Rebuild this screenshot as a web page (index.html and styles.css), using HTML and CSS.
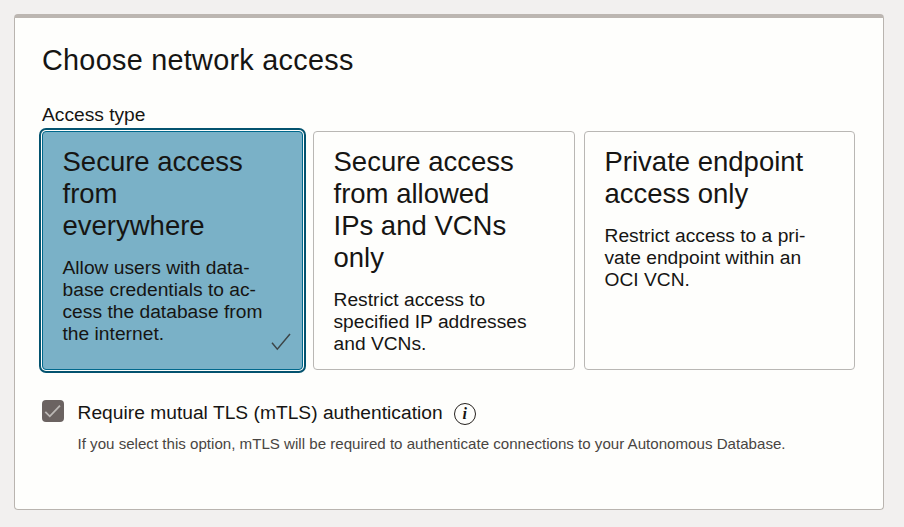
FILE: index.html
```html
<!DOCTYPE html>
<html lang="en">
<head>
<meta charset="utf-8">
<title>Choose network access</title>
<link rel="stylesheet" href="styles.css">
</head>
<body>
<section class="panel">
  <h2 class="title">Choose network access</h2>
  <div class="label">Access type</div>
  <div class="cards">
    <div class="card selected">
      <h3>Secure access<br>from<br>everywhere</h3>
      <p>Allow users with data-<br>base credentials to ac-<br>cess the database from<br>the internet.</p>
      <svg class="tick" width="20" height="18" viewBox="0 0 20 18"><path d="M1 9.8 6.3 16.2 19 1"/></svg>
    </div>
    <div class="card">
      <h3>Secure access<br>from allowed<br>IPs and VCNs<br>only</h3>
      <p>Restrict access to<br>specified IP addresses<br>and VCNs.</p>
    </div>
    <div class="card">
      <h3>Private endpoint<br>access only</h3>
      <p>Restrict access to a pri-<br>vate endpoint within an<br>OCI VCN.</p>
    </div>
  </div>
  <div class="option">
    <span class="checkbox"><svg width="22" height="22" viewBox="0 0 22 22"><path d="M3.3 11.8 7.8 16.3 18 5.7"/></svg></span>
    <div class="option-text">
      <div class="option-label"><span>Require mutual TLS (mTLS) authentication</span><span class="info">i</span></div>
      <div class="hint">If you select this option, mTLS will be required to authenticate connections to your Autonomous Database.</div>
    </div>
  </div>
</section>
</body>
</html>
```
FILE: styles.css
```css
* { box-sizing: border-box; }
body {
  margin: 0;
  padding: 14px 20px 17px 14px;
  height: 527px;
  background: #f2f0ef;
  color: #161513;
  font-family: "Liberation Sans", Arial, sans-serif;
}
h2, h3, p { margin: 0; font-weight: 400; }
.panel {
  height: 496px;
  padding: 26px 28px 0 27px;
  border: 1px solid #b9b4af;
  border-top: 4px solid #bcb6b1;
  border-radius: 4px;
  background: #fefefc;
}
.title { font-size: 28.8px; line-height: 32px; letter-spacing: 0.28px; }
.label { margin-top: 27px; padding-top: 1px; height: 28px; font-size: 19.2px; line-height: 22px; white-space: nowrap; }
.cards {
  display: grid;
  grid-template-columns: 262px 262px 271px;
  column-gap: 9px;
  height: 239px;
}
.card {
  position: relative;
  padding: 14px 0 0 19.5px;
  border: 1px solid #b9b7b4;
  border-radius: 4px;
  white-space: nowrap;
}
.card h3 { font-size: 27.5px; line-height: 32px; }
.card p { margin-top: 15px; font-size: 19.2px; line-height: 22px; letter-spacing: 0.02px; }
.selected {
  margin-right: 1px;
  background: #7ab1c7;
  border-color: #00688c;
  box-shadow: 0 0 0 1px #fefefc, 0 0 0 3px #04536f;
}
.tick { position: absolute; right: 11px; bottom: 18px; fill: none; stroke: #3c4547; stroke-width: 1.5; }
.option { display: flex; gap: 13.5px; margin-top: 30px; }
.checkbox { width: 22px; height: 22px; border-radius: 4px; background: #6b6361; }
.checkbox svg { display: block; fill: none; stroke: #bcb8b5; stroke-width: 1.8; }
.option-label { display: flex; gap: 11px; height: 25px; padding-top: 1px; font-size: 19.2px; line-height: 24px; letter-spacing: 0.02px; white-space: nowrap; }
.info {
  width: 22px;
  height: 22px;
  margin-top: 2px;
  border: 1.5px solid #25211e;
  border-radius: 50%;
  text-align: center;
  font: italic bold 16px/19px "Liberation Serif", serif;
}
.hint { margin-top: 9px; font-size: 15.12px; line-height: 20px; color: #494542; white-space: nowrap; }
```
